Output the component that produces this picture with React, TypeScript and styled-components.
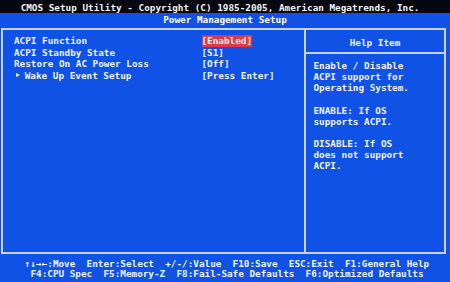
import React from "react";
import styled, { createGlobalStyle } from "styled-components";

const BLUE = "#1152e6";
const LINE = "#c6d2f2";
const TEXT = "#eef2ff";

const GlobalStyle = createGlobalStyle`
  html, body {
    margin: 0;
    padding: 0;
    background: ${BLUE};
  }
  body {
    width: 450px;
    height: 282px;
    overflow: hidden;
  }
`;

const Screen = styled.div`
  width: 450px;
  height: 282px;
  background: ${BLUE};
  display: flex;
  flex-direction: column;
  font-family: "DejaVu Sans Mono", "Liberation Mono", monospace;
  font-weight: bold;
  font-size: 9.33px;
  line-height: 11.3px;
  color: ${TEXT};
  white-space: pre;
  overflow: hidden;
`;

const TitleBar = styled.div`
  height: 12.7px;
  box-sizing: border-box;
  padding: 1.8px 10px 0 0;
  background: #06070f;
  color: #f2f2f2;
  text-align: center;
`;

const SubTitle = styled.div`
  height: 15.3px;
  box-sizing: border-box;
  padding-top: 1.7px;
  text-align: center;
  color: #ffffff;
`;

const Frame = styled.div`
  box-sizing: border-box;
  height: 226px;
  margin: 0 4px 0 1px;
  border: 2px solid ${LINE};
  display: flex;
`;

const ItemList = styled.div`
  flex: 1;
  padding: 5.5px 0 0 11px;
  display: grid;
  grid-template-columns: 187.5px auto;
  grid-auto-rows: 11.4px;
  align-content: start;
`;

const Label = styled.span``;

const Value = styled.span<{ $selected?: boolean }>`
  justify-self: start;
  background: ${(p) => (p.$selected ? "#e03848" : "transparent")};
  color: ${(p) => (p.$selected ? "#fff0f0" : TEXT)};
`;

const Marker = styled.span`
  display: inline-block;
  width: 0;
  height: 0;
  margin-left: 2px;
  margin-right: calc(1ch - 6.5px);
  vertical-align: 1.3px;
  border-left: 4.5px solid ${TEXT};
  border-top: 2.3px solid transparent;
  border-bottom: 2.3px solid transparent;
`;

const HelpPanel = styled.div`
  width: 140px;
  box-sizing: border-box;
  border-left: 2px solid ${LINE};
  display: flex;
  flex-direction: column;
`;

const HelpHeader = styled.div`
  height: 24.5px;
  box-sizing: border-box;
  padding-top: 6.6px;
  border-bottom: 2px solid ${LINE};
  text-align: center;
`;

const HelpBody = styled.div`
  padding: 5.4px 0 0 7.5px;
  line-height: 11.15px;
`;

const Footer = styled.div`
  flex: 1;
  padding: 4.8px 0 0 4px;
  line-height: 10.6px;
  text-align: center;
`;

const items = [
  { label: "ACPI Function", value: "[Enabled]", selected: true },
  { label: "ACPI Standby State", value: "[S1]" },
  { label: "Restore On AC Power Loss", value: "[Off]" },
  { label: "Wake Up Event Setup", value: "[Press Enter]", submenu: true },
];

const help = [
  "Enable / Disable",
  "ACPI support for",
  "Operating System.",
  "",
  "ENABLE: If OS",
  "supports ACPI.",
  "",
  "DISABLE: If OS",
  "does not support",
  "ACPI.",
];

export default function App() {
  return (
    <>
      <GlobalStyle />
      <Screen>
        <TitleBar>
          CMOS Setup Utility - Copyright (C) 1985-2005, American Megatrends, Inc.
        </TitleBar>
        <SubTitle>Power Management Setup</SubTitle>
        <Frame>
          <ItemList>
            {items.map((it) => (
              <React.Fragment key={it.label}>
                <Label>
                  {it.submenu && <Marker />}
                  {it.submenu && " "}
                  {it.label}
                </Label>
                <Value $selected={it.selected}>{it.value}</Value>
              </React.Fragment>
            ))}
          </ItemList>
          <HelpPanel>
            <HelpHeader>Help Item</HelpHeader>
            <HelpBody>
              {help.map((line, i) => (
                <div key={i}>{line || " "}</div>
              ))}
            </HelpBody>
          </HelpPanel>
        </Frame>
        <Footer>
          <div>{"↑↓→←:Move  Enter:Select  +/-/:Value  F10:Save  ESC:Exit  F1:General Help"}</div>
          <div>{"F4:CPU Spec  F5:Memory-Z  F8:Fail-Safe Defaults  F6:Optimized Defaults"}</div>
        </Footer>
      </Screen>
    </>
  );
}
